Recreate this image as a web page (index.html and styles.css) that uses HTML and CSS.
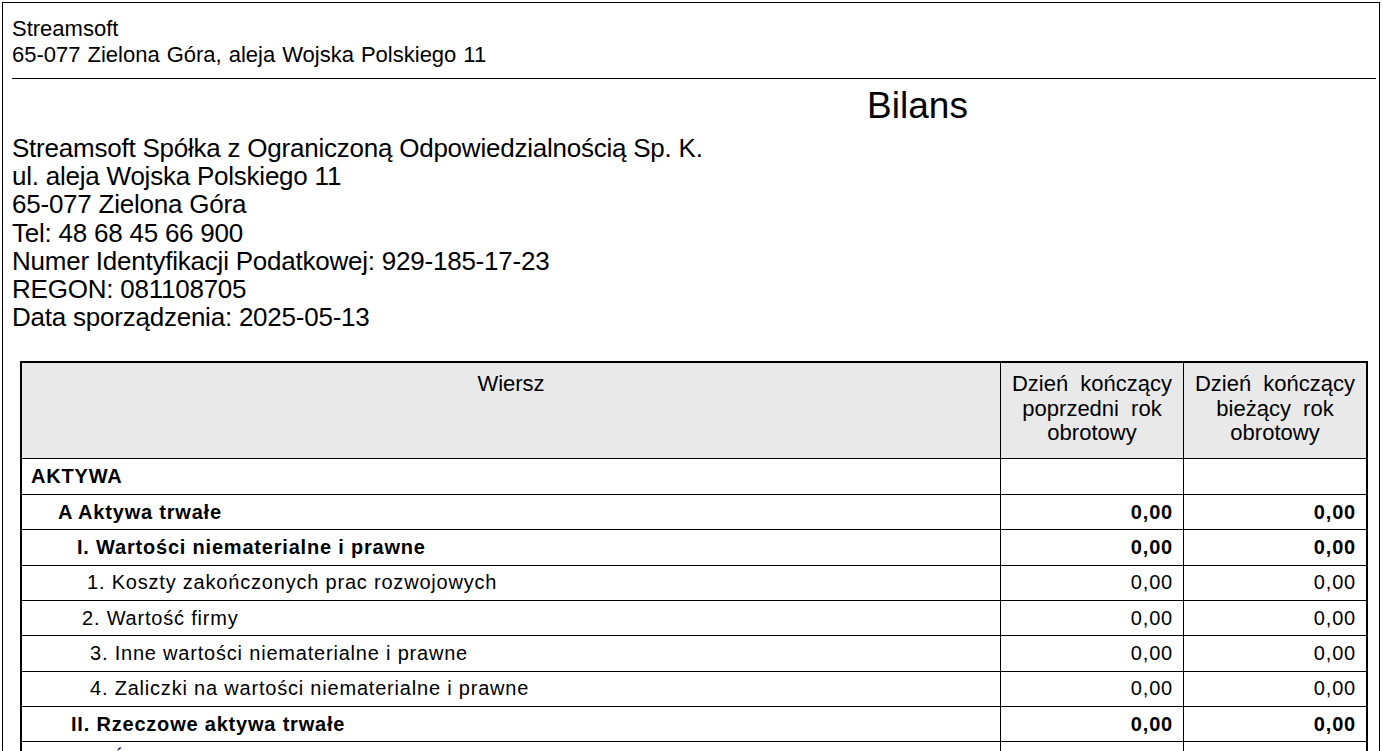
FILE: index.html
```html
<!DOCTYPE html>
<html lang="pl">
<head>
<meta charset="utf-8">
<title>Bilans</title>
<link rel="stylesheet" href="styles.css">
</head>
<body>
<div class="page">
  <div class="letterhead">
    <div>Streamsoft</div>
    <div>65-077 Zielona Góra, aleja Wojska Polskiego 11</div>
  </div>
  <div class="rule"></div>
  <h1 class="title">Bilans</h1>
  <div class="company">
    <div>Streamsoft Spółka z Ograniczoną Odpowiedzialnością Sp. K.</div>
    <div>ul. aleja Wojska Polskiego 11</div>
    <div>65-077 Zielona Góra</div>
    <div>Tel: 48 68 45 66 900</div>
    <div>Numer Identyfikacji Podatkowej: 929-185-17-23</div>
    <div>REGON: 081108705</div>
    <div>Data sporządzenia: 2025-05-13</div>
  </div>
  <table class="sheet">
    <thead>
      <tr>
        <th class="c-label">Wiersz</th>
        <th class="c-prev">Dzień kończący<br>poprzedni rok<br>obrotowy</th>
        <th class="c-cur">Dzień kończący<br>bieżący rok<br>obrotowy</th>
      </tr>
    </thead>
    <tbody>
      <tr class="first">
        <td class="label bold i0">AKTYWA</td>
        <td class="num"></td>
        <td class="num"></td>
      </tr>
      <tr>
        <td class="label bold i1">A Aktywa trwałe</td>
        <td class="num bold">0,00</td>
        <td class="num bold">0,00</td>
      </tr>
      <tr>
        <td class="label bold i2">I. Wartości niematerialne i prawne</td>
        <td class="num bold">0,00</td>
        <td class="num bold">0,00</td>
      </tr>
      <tr>
        <td class="label i3">1. Koszty zakończonych prac rozwojowych</td>
        <td class="num">0,00</td>
        <td class="num">0,00</td>
      </tr>
      <tr>
        <td class="label i3b">2. Wartość firmy</td>
        <td class="num">0,00</td>
        <td class="num">0,00</td>
      </tr>
      <tr>
        <td class="label i3c">3. Inne wartości niematerialne i prawne</td>
        <td class="num">0,00</td>
        <td class="num">0,00</td>
      </tr>
      <tr>
        <td class="label i3c">4. Zaliczki na wartości niematerialne i prawne</td>
        <td class="num">0,00</td>
        <td class="num">0,00</td>
      </tr>
      <tr>
        <td class="label bold i2b">II. Rzeczowe aktywa trwałe</td>
        <td class="num bold">0,00</td>
        <td class="num bold">0,00</td>
      </tr>
      <tr>
        <td class="label i3">1. Środki trwałe</td>
        <td class="num">0,00</td>
        <td class="num">0,00</td>
      </tr>
    </tbody>
  </table>
</div>
</body>
</html>
```
FILE: styles.css
```css
html, body {
  margin: 0;
  padding: 0;
  overflow: hidden;
  background: #fff;
}

body {
  font-family: "Liberation Sans", Arial, sans-serif;
  color: #000;
}

.page {
  margin: 2px 3px 0 2px;
  border: 1px solid #000;
  border-bottom: 0;
  min-height: 900px;
}

.letterhead {
  padding: 13.4px 0 0 9px;
  font-size: 22px;
  line-height: 26px;
  word-spacing: 0.9px;
}

.rule {
  margin: 9.6px 3px 0 9px;
  border-top: 1px solid #000;
}

.title {
  margin: 6.45px 0 0 0;
  padding-left: 453px;
  text-align: center;
  font-size: 37px;
  line-height: 42px;
  font-weight: normal;
}

.company {
  margin-top: 6.8px;
  padding-left: 9px;
  font-size: 26px;
  line-height: 28.12px;
  letter-spacing: -0.23px;
}

.sheet {
  margin: 29.9px 0 0 17px;
  width: 1348px;
  border: 2px solid #000;
  border-spacing: 0;
  border-collapse: separate;
  table-layout: fixed;
  font-size: 20px;
  letter-spacing: 0.8px;
}

.sheet th,
.sheet td {
  box-sizing: border-box;
  padding: 0;
  border-right: 1px solid #000;
  border-bottom: 1px solid #000;
}

.sheet th:last-child,
.sheet td:last-child {
  border-right: 0;
}

.sheet th {
  height: 96px;
  background: #e9e9e9;
  font-weight: normal;
  font-size: 22px;
  line-height: 24.5px;
  letter-spacing: 0;
  word-spacing: 6px;
  vertical-align: top;
  text-align: center;
  padding-top: 9.1px;
}

.c-label { width: 979px; }
.c-prev { width: 183px; }
.c-cur { width: 182px; }

.sheet td {
  height: 35.33px;
  vertical-align: middle;
  white-space: nowrap;
}

.sheet tr.first td {
  height: 36px;
}

.bold {
  font-weight: bold;
}

.num {
  text-align: right;
  padding-right: 10px !important;
}

.i0 { padding-left: 9px !important; }
.i1 { padding-left: 36px !important; }
.i2 { padding-left: 55px !important; }
.i2b { padding-left: 49px !important; }
.i3 { padding-left: 65px !important; }
.i3b { padding-left: 60px !important; }
.i3c { padding-left: 68px !important; }
```
